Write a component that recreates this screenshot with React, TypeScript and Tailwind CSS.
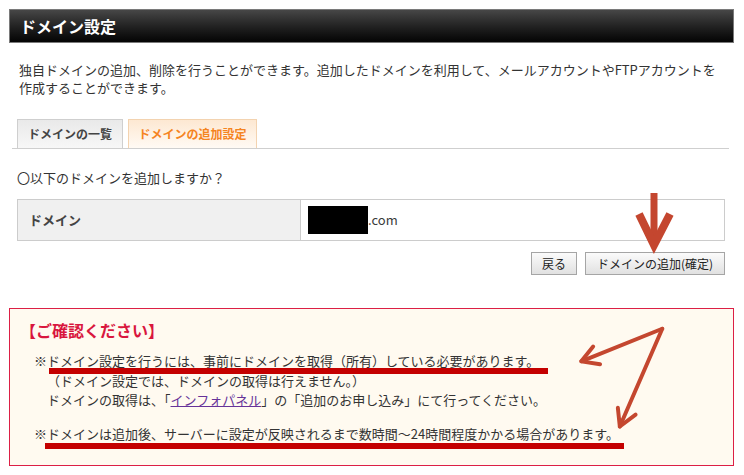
import React from 'react';

const jp = "font-['Noto_Sans_CJK_JP','Noto_Sans',sans-serif]";

const DownArrow: React.FC = () => (
    <svg className="absolute left-[630px] top-[190px] w-[50px] h-[64px] pointer-events-none" viewBox="0 0 50 64">
        <line x1="24" y1="3" x2="24" y2="52" stroke="#c4462f" strokeWidth="7" />
        <polyline points="9,24 24,55 40,24" fill="none" stroke="#c4462f" strokeWidth="8" strokeLinejoin="miter" />
    </svg>
);

const NoticeArrows: React.FC = () => (
    <svg className="absolute inset-0 w-full h-full pointer-events-none" viewBox="0 0 725 158">
        <g stroke="#c4472f" strokeWidth="4" strokeLinecap="round" fill="none">
            <line x1="657" y1="20" x2="575" y2="53" />
            <polyline points="594,56 575,53 587,38" strokeLinejoin="round" />
            <line x1="657" y1="20" x2="614" y2="119" />
            <polyline points="630,107 614,119 612,100" strokeLinejoin="round" />
        </g>
    </svg>
);

const App: React.FC = () => {
    return (
        <div className={`relative w-[744px] h-[475px] bg-white pt-[9px] pl-[9px] ${jp} text-[#333]`}>
            {/* header */}
            <div className="w-[725px] h-[34px] flex items-center pl-[10px] border border-[#7a7a7a] bg-linear-to-b from-[#474747] to-[#050505]">
                <h1 className="text-white text-[16px] font-bold leading-none">ドメイン設定</h1>
            </div>

            <p className="mt-[18px] pl-[10px] text-[13px] leading-[18px] whitespace-nowrap">
                独自ドメインの追加、削除を行うことができます。追加したドメインを利用して、メールアカウントやFTPアカウントを<br />
                作成することができます。
            </p>

            {/* tabs */}
            <div className="mt-[22px] ml-[3px] w-[717px] flex items-end gap-[5px] pl-[5px] border-b border-[#cfcfcf]">
                <div className="w-[106px] h-[29px] flex items-center justify-center border border-b-0 border-[#cfcfcf] bg-linear-to-b from-[#e9e9e9] to-[#f7f7f7] text-[12px] font-bold text-[#444]">
                    ドメインの一覧
                </div>
                <div className="w-[129px] h-[29px] flex items-center justify-center border border-b-0 border-[#f3d3b0] bg-linear-to-b from-[#fde8d2] to-[#fffaf4] text-[12px] font-bold text-[#f5841f]">
                    ドメインの追加設定
                </div>
            </div>

            <p className="mt-[20px] pl-[8px] text-[13px] leading-[18px]">〇以下のドメインを追加しますか？</p>

            {/* domain table */}
            <div className="mt-[12px] ml-[8px] w-[708px] h-[42px] flex border border-[#cccccc]">
                <div className="w-[283px] bg-[#f0f0f0] border-r border-[#cccccc] flex items-center pl-[11px] text-[13px] font-bold text-[#444]">
                    ドメイン
                </div>
                <div className="flex-1 flex items-center pl-[7px] text-[13px]">
                    <span className="inline-block w-[60px] h-[28px] bg-black" />
                    <span className="text-[#3a3a3a]">.com</span>
                </div>
            </div>

            <div className="mt-[11px] ml-[8px] w-[708px] flex justify-end gap-[8px]">
                <button className="w-[46px] h-[23px] border border-[#a5a5a5] bg-linear-to-b from-[#fbfbfb] to-[#e1e1e1] text-[12px] text-[#222] leading-none">
                    戻る
                </button>
                <button className="w-[140px] h-[23px] border border-[#a5a5a5] bg-linear-to-b from-[#fbfbfb] to-[#e1e1e1] text-[12px] text-[#222] leading-none">
                    ドメインの追加(確定)
                </button>
            </div>

            {/* notice */}
            <div className="relative mt-[33px] w-[725px] h-[158px] border border-[#dc1f45] bg-[#fffaf0] pt-[11px] pl-[15px]">
                <p className="text-[16px] leading-[20px] font-bold text-[#d9163e] -ml-[5px]">【ご確認ください】</p>
                <div className="mt-[11px] pl-[9px] text-[13px] leading-[19.5px]">
                    <p>※ドメイン設定を行うには、事前にドメインを取得（所有）している必要があります。</p>
                    <div className="pl-[13px]">
                        <p>（ドメイン設定では、ドメインの取得は行えません。）</p>
                        <p>
                            ドメインの取得は、「<a href="#" className="text-[#663399] underline">インフォパネル</a>」の「追加のお申し込み」にて行ってください。
                        </p>
                    </div>
                    <p className="mt-[14px]">※ドメインは追加後、サーバーに設定が反映されるまで数時間～24時間程度かかる場合があります。</p>
                </div>

                {/* annotations */}
                <span className="absolute left-[39px] top-[59px] w-[499px] h-[6px] bg-[#c40000]" />
                <span className="absolute left-[35px] top-[134px] w-[579px] h-[6px] bg-[#c40000]" />
                <NoticeArrows />
            </div>

            <DownArrow />
        </div>
    );
};

export default App;
